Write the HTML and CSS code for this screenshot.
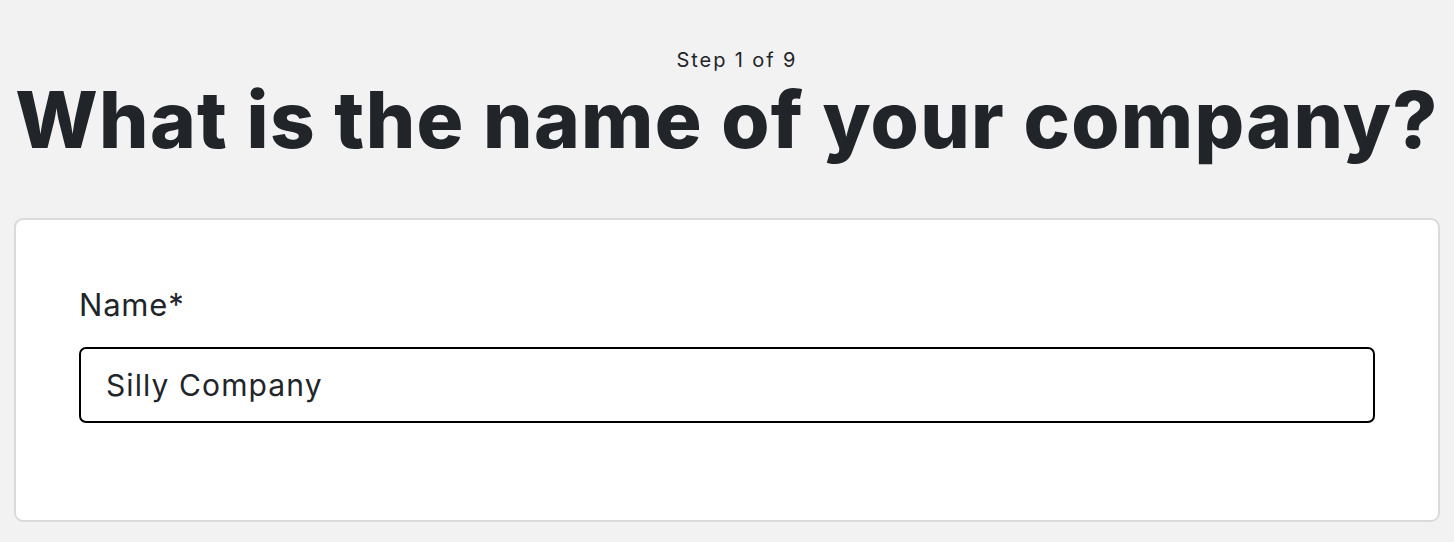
FILE: index.html
```html
<!DOCTYPE html>
<html lang="en">
<head>
<meta charset="utf-8">
<title>Step 1 of 9</title>
<link rel="stylesheet" href="styles.css">
</head>
<body>
<main class="page">
  <header class="intro">
    <p class="step">Step 1 of 9</p>
    <h1 class="title">What is the name of your company?</h1>
  </header>
  <section class="card">
    <label class="label" for="name">Name*</label>
    <input class="input" id="name" type="text" value="Silly Company">
  </section>
</main>
</body>
</html>
```

FILE: styles.css
```css
html, body {
  margin: 0;
  padding: 0;
  background: #f2f2f2;
  color: #212529;
  font-family: "Inter", "Noto Sans", sans-serif;
}
.page {
  padding: 0 14px;
}
.intro {
  display: flex;
  flex-direction: column;
  align-items: center;
  padding-top: 46px;
}
.step {
  margin: 0 0 0 20px;
  font-size: 20px;
  line-height: 28px;
  letter-spacing: 1.9px;
}
.title {
  margin: 0;
  font-size: 78px;
  font-weight: 800;
  line-height: 92px;
  letter-spacing: 1.3px;
  white-space: nowrap;
}
.card {
  margin-top: 52px;
  background: #fff;
  border: 2px solid #dadada;
  border-radius: 9px;
  padding: 70px 63px 97px;
  display: flex;
  flex-direction: column;
  gap: 27px;
}
.label {
  font-size: 31px;
  line-height: 30px;
  letter-spacing: 0.8px;
}
.input {
  height: 76px;
  box-sizing: border-box;
  border: 2px solid #000;
  border-radius: 7px;
  padding: 0 25px;
  font-family: inherit;
  font-size: 30px;
  letter-spacing: 1.1px;
  color: #212529;
  background: #fff;
  outline: none;
}
```
